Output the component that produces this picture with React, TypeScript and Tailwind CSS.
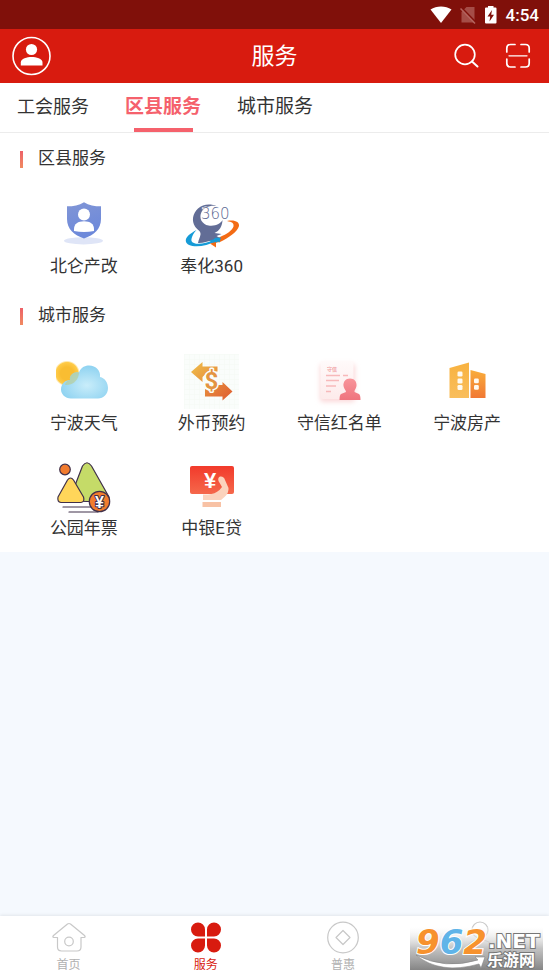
import React, { useState } from 'react';

const StatusBar: React.FC = () => (
  <div className="flex h-[29px] items-center justify-end bg-[#80100a] pr-[10px] text-white">
    <svg className="mr-2 h-5 w-[22px]" viewBox="0 0 22 20" fill="currentColor" aria-hidden="true">
      <path d="M0.5 4.5C6.5 0.6 15.5 0.6 21.5 4.5L11 18z" />
    </svg>
    <svg className="mr-2 h-5 w-4" viewBox="0 0 16 20" aria-hidden="true">
      <path d="M6.5 2H14.5V17.5H1.5V7z" fill="#a54d47" />
      <path d="M1.5 2.5L16 17.5" stroke="#80100a" strokeWidth="1.6" />
      <path d="M0.5 3.5L15 18.5" stroke="#b4635e" strokeWidth="1.5" />
    </svg>
    <svg className="mr-2 h-5 w-[14px]" viewBox="0 0 14 20" aria-hidden="true">
      <path d="M4 2.5V1H9.5V2.5H11.5Q12.5 2.5 12.5 3.5V17.5Q12.5 18.5 11.5 18.5H2Q1 18.5 1 17.5V3.5Q1 2.5 2 2.5z" fill="#fff" />
      <path d="M8 5L3.5 11.5H6.2L5.5 16.5L10 9.8H7.2z" fill="#80100a" />
    </svg>
    <span className="text-[17px] leading-5 font-medium">4:54</span>
  </div>
);

const Header: React.FC = () => (
  <header className="grid h-[54px] grid-cols-3 items-center bg-[#d81b0f] px-3 text-white">
    <button aria-label="我的账号" className="justify-self-start">
      <svg className="h-10 w-10" viewBox="0 0 40 40" fill="none">
        <circle cx="19.5" cy="20" r="18.5" stroke="#fff" strokeWidth="1.6" />
        <circle cx="19.5" cy="13.5" r="5.6" fill="#fff" />
        <path d="M8.8 29.5V26.5C8.8 22.5 15 21 19.6 21S30.5 22.5 30.5 26.5V29.5z" fill="#fff" />
      </svg>
    </button>
    <h1 className="pt-[2px] text-center text-[23px] leading-8">服务</h1>
    <div className="flex items-center gap-[26px] justify-self-end pr-[6px]">
      <button aria-label="搜索">
        <svg className="h-[26px] w-[26px]" viewBox="0 0 26 26" fill="none" stroke="#fff" strokeLinecap="round">
          <circle cx="12" cy="11.5" r="9.8" strokeWidth="1.7" />
          <path d="M19 18.5L24.5 23.5" strokeWidth="2" />
        </svg>
      </button>
      <button aria-label="扫一扫">
        <svg className="h-[26px] w-[26px]" viewBox="0 0 26 26" fill="none" stroke="#fff" strokeWidth="1.7" strokeLinecap="round">
          <path d="M10 1.5H5.5Q1.8 1.5 1.8 5.2V9M16 1.5H20.5Q24.2 1.5 24.2 5.2V9M1.8 16V20.3Q1.8 24 5.5 24H10M24.2 16V20.3Q24.2 24 20.5 24H16" />
          <path d="M4 12.8H22" strokeWidth="1.3" />
        </svg>
      </button>
    </div>
  </header>
);

const ShieldIcon = () => (
  <svg className="h-14 w-14" viewBox="0 0 56 56" aria-hidden="true">
    <defs>
      <linearGradient id="shield" x1="0" y1="0" x2="0.3" y2="1">
        <stop offset="0" stopColor="#8196d6" />
        <stop offset="1" stopColor="#6c88da" />
      </linearGradient>
    </defs>
    <ellipse cx="27.5" cy="43.8" rx="19.5" ry="3.6" fill="#dfe5f7" />
    <path d="M28 5.2C33 8.3 38.5 9.3 45 9.3V22C45 32 38 38 28 41.5C18 38 11 32 11 22V9.3C17.5 9.3 23 8.3 28 5.2z" fill="url(#shield)" />
    <circle cx="28" cy="17.5" r="6" fill="#fff" />
    <path d="M18 34V32C18 27 22 24.3 28 24.3S38 27 38 32V34Q28 36 18 34z" fill="#fff" />
  </svg>
);

const Fenghua360Icon = () => (
  <svg className="h-14 w-14" viewBox="0 0 56 56" aria-hidden="true">
    <path d="M33 9.5C27 6.5 19 7 14 11.5C8.5 16.5 7.5 24 11 29.5C13.5 33 17 34 16.5 37.5C16 40.5 14.5 43 14 46C19 46.5 23 43.8 29.5 43.5L32 41.5H37L32.5 39L37.5 37L30.5 36C35.5 34 38.5 29 38.5 22.5z" fill="#626d96" />
    <path d="M34 9.5C28 7.5 20 10 17.5 15C14.5 21 18 27.5 24.5 28.5C31 29.5 36.5 27 39.5 22V14z" fill="#fff" />
    <text x="17" y="21.5" fontSize="15" fontFamily="DejaVu Sans, sans-serif" fontWeight="200" fill="#5d6992" stroke="#fff" strokeWidth="1" paintOrder="stroke">360</text>
    <path d="M12.5 33C6 36.5 1.5 40 1.8 44C2.5 51 20 51 32 44L30 42.5C20 48 9 48 7.5 44C7 41 9.5 36 12.5 33z" fill="#169bd7" />
    <path d="M43 24C51 22.5 55.5 25 55 29C53.5 35 44 41 36 45L33 45.5L28 46L36 40C43 37 48 33.5 49.5 29.5C50 26 48 25 43 24z" fill="#f36b14" />
    <path d="M25.5 43.5L31 42L30 41L37 40.5L35.5 45.5L34 44.5L30 47z" fill="#169bd7" />
    <path d="M26 46.5L32 45L32 50.5z" fill="#f36b14" />
  </svg>
);

const WeatherIcon = () => (
  <svg className="h-14 w-14" viewBox="0 0 56 56" aria-hidden="true">
    <defs>
      <radialGradient id="cloud" cx="0.55" cy="0.6" r="0.65">
        <stop offset="0" stopColor="#c9edfa" />
        <stop offset="1" stopColor="#89d0f0" />
      </radialGradient>
      <radialGradient id="sun">
        <stop offset="0.5" stopColor="#f9bd32" />
        <stop offset="0.85" stopColor="#ffcb48" />
        <stop offset="1" stopColor="#ffdc80" stopOpacity="0" />
      </radialGradient>
    </defs>
    <circle cx="11" cy="19.5" r="13" fill="url(#sun)" />
    <path d="M15 44.5C9 44.5 5 40 5 35.5C5 30 9 26 14 26C13 20.5 19 17 23 18.5C25 12.5 30 11.5 33 11.5C40 11.5 45 17 44 23C49 24 52 29 52 34C52 40 47.5 44.5 42 44.5z" fill="url(#cloud)" />
    <path d="M14 26C13 20.5 19 17 23 18.5C23 25 18 31.5 9 31Q10 26.5 14 26z" fill="#b8cd9a" fillOpacity="0.7" />
  </svg>
);

const CurrencyIcon = () => (
  <svg className="h-14 w-14" viewBox="0 0 56 56" aria-hidden="true">
    <defs>
      <linearGradient id="coin" gradientUnits="userSpaceOnUse" x1="10" y1="8" x2="44" y2="46">
        <stop offset="0" stopColor="#efbd4a" />
        <stop offset="1" stopColor="#df6031" />
      </linearGradient>
      <pattern id="mesh" width="5" height="5" patternUnits="userSpaceOnUse">
        <path d="M0 0H5M0 0V5" stroke="#f3f9f4" strokeWidth="1" />
      </pattern>
    </defs>
    <rect width="55" height="55" fill="#fafdfb" />
    <rect width="55" height="55" fill="url(#mesh)" />
    <path d="M7 18L18.5 8V12.5H33.5V17.5H24L18.5 23V28z" fill="url(#coin)" />
    <path d="M21 35L25 37L34 31H38.5V28L48.5 37.5L38.5 46.5V42.5H21z" fill="url(#coin)" />
    <text x="27.5" y="35" textAnchor="middle" fontSize="24" fontWeight="700" fontFamily="Roboto, sans-serif" fill="#e39442" stroke="#fafdfb" strokeWidth="3" strokeLinejoin="round" paintOrder="stroke">$</text>
  </svg>
);

const HonorListIcon = () => (
  <svg className="h-14 w-14" viewBox="0 0 56 56" aria-hidden="true">
    <defs>
      <linearGradient id="paper" x1="0" y1="0" x2="0" y2="1">
        <stop offset="0" stopColor="#fffafa" />
        <stop offset="1" stopColor="#fdebeb" />
      </linearGradient>
      <linearGradient id="person" x1="0" y1="0" x2="0" y2="1">
        <stop offset="0" stopColor="#f8949a" />
        <stop offset="1" stopColor="#ef747e" />
      </linearGradient>
      <filter id="glow" x="-30%" y="-30%" width="160%" height="160%">
        <feGaussianBlur stdDeviation="2.5" />
      </filter>
    </defs>
    <rect x="9" y="10" width="35" height="38" rx="3" fill="#fbd9da" filter="url(#glow)" />
    <rect x="9.5" y="7" width="33" height="38" rx="2" fill="url(#paper)" />
    <text x="16" y="17" fontSize="5" fontWeight="700" fontFamily="Noto Sans CJK SC, sans-serif" fill="#f0a0a2">守信</text>
    <path d="M15 21.5H29M32 21.5H37M15 26.5H28M15 32H25M15 37.5H20" stroke="#f7b9ba" strokeWidth="1.3" />
    <path d="M39 24.5C43.5 24.5 46 28 45.5 32C45 35 43 36.5 43.5 38L48 40Q49.5 41 49.5 46H28.5Q28.5 41 30 40L35 38C35 36.5 33 35 32.5 32C32 28 34.5 24.5 39 24.5z" fill="url(#person)" />
  </svg>
);

const HouseIcon = () => (
  <svg className="h-14 w-14" viewBox="0 0 56 56" aria-hidden="true">
    <defs>
      <linearGradient id="tower" x1="0" y1="0" x2="0" y2="1">
        <stop offset="0" stopColor="#f8b240" />
        <stop offset="1" stopColor="#f9be5c" />
      </linearGradient>
      <linearGradient id="annex" x1="0" y1="0" x2="0" y2="1">
        <stop offset="0" stopColor="#f9ad3b" />
        <stop offset="1" stopColor="#f17834" />
      </linearGradient>
    </defs>
    <path d="M10.5 14L30 8.5V44H10.5z" fill="url(#tower)" />
    <path d="M31.5 16L46.5 20V44H31.5z" fill="url(#annex)" />
    <g fill="#fffaf0">
      <rect x="18.5" y="17.5" width="5" height="5" rx="1.3" />
      <rect x="18.5" y="24.5" width="5" height="5" rx="1.3" />
      <rect x="18.5" y="31" width="5" height="5" rx="1.3" />
      <rect x="35" y="24.5" width="4.8" height="4.8" rx="1.3" />
      <rect x="35" y="31" width="4.8" height="4.8" rx="1.3" />
    </g>
  </svg>
);

const ParkIcon = () => (
  <svg className="h-14 w-14" viewBox="0 0 56 56" stroke="#40304a" strokeWidth="1.2" strokeLinecap="round" strokeLinejoin="round" aria-hidden="true">
    <circle cx="9" cy="10.5" r="5.3" fill="#f17b2e" />
    <path d="M13 42L26.5 7Q31 0.5 35.5 7L53 38Q54 43 50 43z" fill="#c5db68" />
    <path d="M2 38L11.5 21Q14.5 17 17.5 21L27.5 38Q29 43 25 43.5H5Q1 43 2 38z" fill="#ffd65a" />
    <path d="M7 48H38M13 53H42" fill="none" />
    <circle cx="43.5" cy="42.5" r="10.2" fill="#f17c2d" />
    <text x="43.5" y="48.5" textAnchor="middle" fontSize="16" fontWeight="700" fontFamily="Liberation Sans, sans-serif" fill="#fff" strokeWidth="2" paintOrder="stroke">¥</text>
  </svg>
);

const LoanIcon = () => (
  <svg className="h-14 w-14" viewBox="0 0 56 56" aria-hidden="true">
    <defs>
      <linearGradient id="card" x1="0" y1="0" x2="0" y2="1">
        <stop offset="0" stopColor="#f23a2b" />
        <stop offset="1" stopColor="#f5684b" />
      </linearGradient>
    </defs>
    <rect x="6" y="7" width="44" height="28" rx="2" fill="url(#card)" />
    <text x="26" y="28.5" textAnchor="middle" fontSize="22" fontWeight="700" fontFamily="Liberation Sans, sans-serif" fill="#fff">¥</text>
    <path d="M36 17.5Q40 17 41 21L44.5 29Q45 34 40.5 38L37 41H19V35.5H24Q31 35 35.5 31L38 28L34.5 22Q33.5 18.5 36 17.5z" fill="#fbd3bd" />
    <rect x="18.5" y="43" width="18.5" height="5" fill="#f8c2a5" />
  </svg>
);

interface Service {
  name: string;
  Icon: React.FC;
}

const districtServices: Service[] = [
  { name: '北仑产改', Icon: ShieldIcon },
  { name: '奉化360', Icon: Fenghua360Icon }
];

const cityServices: Service[] = [
  { name: '宁波天气', Icon: WeatherIcon },
  { name: '外币预约', Icon: CurrencyIcon },
  { name: '守信红名单', Icon: HonorListIcon },
  { name: '宁波房产', Icon: HouseIcon },
  { name: '公园年票', Icon: ParkIcon },
  { name: '中银E贷', Icon: LoanIcon }
];

const ServiceSection: React.FC<{ title: string; items: Service[] }> = ({ title, items }) => (
  <section className="bg-white pr-[18px] pb-[11px] pl-5">
    <h2 className="flex h-[52px] items-center gap-[15px] text-[17px]">
      <span className="h-[17px] w-[3px] bg-linear-to-b from-[#ed6068] to-[#f08a60]" />
      {title}
    </h2>
    <div className="grid grid-cols-4 gap-y-[23px] pt-3">
      {items.map(({ name, Icon }) => (
        <a key={name} href="#" className="flex flex-col items-center text-[17px] leading-[26px] whitespace-nowrap">
          <Icon />
          {name}
        </a>
      ))}
    </div>
  </section>
);

const HomeIcon = () => (
  <svg className="h-9 w-9" viewBox="0 0 36 36" fill="none" stroke="#c8c8c8" strokeWidth="1.2" strokeLinejoin="round" aria-hidden="true">
    <path d="M6.5 17.5H3Q1 17 2.5 15.5L16.5 4Q18 3 19.5 4L33.5 15.5Q35 17 33 17.5H30V27Q30 31 26 31H10.5Q6.5 31 6.5 27z" />
    <circle cx="18" cy="21.5" r="4.3" />
  </svg>
);

const CloverIcon = () => (
  <svg className="h-9 w-9" viewBox="0 0 36 36" fill="#d81b0f" aria-hidden="true">
    <path d="M17 16.5H10A7 7 0 1 1 17 9.5zM19 16.5V9.5A7 7 0 1 1 26 16.5zM17 18.5V25.5A7 7 0 1 1 10 18.5zM19 18.5H26A7 7 0 1 1 19 25.5z" />
  </svg>
);

const BenefitIcon = () => (
  <svg className="h-9 w-9" viewBox="0 0 36 36" fill="none" stroke="#c8c8c8" strokeWidth="1.2" strokeLinejoin="round" aria-hidden="true">
    <circle cx="18" cy="17.5" r="15.3" />
    <path d="M18 10.5L25 17.5L18 24.5L11 17.5z" />
  </svg>
);

const MineIcon = () => (
  <svg className="h-9 w-9" viewBox="0 0 36 36" fill="none" stroke="#c8c8c8" strokeWidth="1.2" aria-hidden="true">
    <circle cx="18" cy="10" r="8" />
    <path d="M4 32Q5 20 18 20T32 32z" />
  </svg>
);

const Watermark: React.FC = () => (
  <svg className="absolute right-[6px] bottom-[6px] h-[43px] w-[133px] overflow-visible" viewBox="0 0 133 43">
    <defs>
      <linearGradient id="plate" x1="0" y1="0" x2="0" y2="1">
        <stop offset="0" stopColor="#fff" stopOpacity="0.3" />
        <stop offset="0.5" stopColor="#bcbcbc" stopOpacity="0.9" />
        <stop offset="1" stopColor="#808080" stopOpacity="0.96" />
      </linearGradient>
    </defs>
    <rect width="133" height="43" fill="url(#plate)" />
    <path d="M6 28Q35 43 68 33L65 30L75 30L71 41L69 37Q30 48 6 28z" fill="#fff" stroke="#858585" strokeWidth="0.6" />
    <text x="6" y="27" fontFamily="DejaVu Sans, sans-serif" fontSize="34" fontWeight="700" fontStyle="italic" stroke="#fff" strokeWidth="2" paintOrder="stroke">
      <tspan fill="#f7922d">9</tspan>
      <tspan fill="#60b4e8">6</tspan>
      <tspan fill="#f7922d">2</tspan>
    </text>
    <g fill="#fff" stroke="#777" strokeWidth="2" paintOrder="stroke" fontWeight="700">
      <text x="78" y="21" fontSize="20" fontFamily="DejaVu Sans, sans-serif">.NET</text>
      <text x="77" y="39" fontSize="16" fontFamily="Noto Sans CJK SC, sans-serif">乐游网</text>
    </g>
  </svg>
);

const navItems = [
  { name: '首页', Icon: HomeIcon },
  { name: '服务', Icon: CloverIcon },
  { name: '普惠', Icon: BenefitIcon },
  { name: '我的', Icon: MineIcon }
];

const tabs = ['工会服务', '区县服务', '城市服务'];

const App: React.FC = () => {
  const [activeTab, setActiveTab] = useState('区县服务');
  const [activeNav, setActiveNav] = useState('服务');

  return (
    <div className="flex min-h-screen flex-col bg-[#f5f9fe] font-[Roboto,'Noto_Sans_CJK_SC',sans-serif] text-[#333]">
      <StatusBar />
      <Header />

      <div className="flex h-[50px] gap-9 border-b border-[#ececec] bg-white px-[17px]">
        {tabs.map((tab, index) => (
          <button
            key={tab}
            onClick={() => setActiveTab(tab)}
            className={`flex flex-col items-center justify-between pt-[9px] leading-[30px] ${
              index === 0 ? 'text-[18px]' : 'text-[19px]'
            } ${activeTab === tab ? 'font-bold text-[#f5616c]' : ''}`}
          >
            {tab}
            {activeTab === tab && <span className="h-1 w-[59px] bg-[#f5616c]" />}
          </button>
        ))}
      </div>

      <main className="flex-1">
        <ServiceSection title="区县服务" items={districtServices} />
        <ServiceSection title="城市服务" items={cityServices} />
      </main>

      {/* Bottom navigation */}
      <nav className="relative grid h-[60px] grid-cols-4 bg-white shadow-[0_-1px_3px_rgba(0,0,0,0.08)]">
        {navItems.map(({ name, Icon }) => (
          <a
            key={name}
            href="#"
            onClick={() => setActiveNav(name)}
            className={`flex flex-col items-center pt-1 text-xs leading-[18px] ${
              activeNav === name ? 'text-[#d81b0f]' : 'text-[#b0b0b0]'
            }`}
          >
            <Icon />
            {name}
          </a>
        ))}
        <Watermark />
      </nav>
    </div>
  );
};

export default App;
